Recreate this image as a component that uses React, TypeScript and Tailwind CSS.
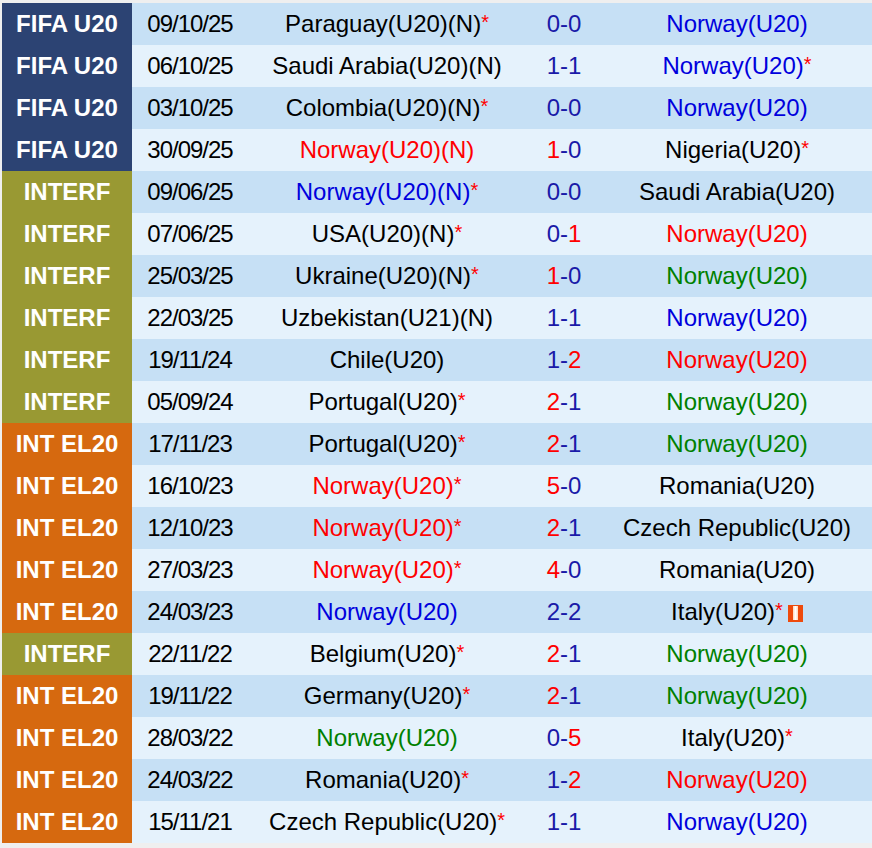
import React from "react";

type Side = { name: string; color: "k" | "b" | "r" | "g"; star?: boolean; card?: boolean };
type Row = { lg: "F" | "I" | "E"; date: string; home: Side; s1: string; s2: string; win: 0 | 1 | 2; away: Side };

const rows: Row[] = [
  { lg: "F", date: "09/10/25", home: { name: "Paraguay(U20)(N)", color: "k", star: true }, s1: "0", s2: "0", win: 0, away: { name: "Norway(U20)", color: "b" } },
  { lg: "F", date: "06/10/25", home: { name: "Saudi Arabia(U20)(N)", color: "k" }, s1: "1", s2: "1", win: 0, away: { name: "Norway(U20)", color: "b", star: true } },
  { lg: "F", date: "03/10/25", home: { name: "Colombia(U20)(N)", color: "k", star: true }, s1: "0", s2: "0", win: 0, away: { name: "Norway(U20)", color: "b" } },
  { lg: "F", date: "30/09/25", home: { name: "Norway(U20)(N)", color: "r" }, s1: "1", s2: "0", win: 1, away: { name: "Nigeria(U20)", color: "k", star: true } },
  { lg: "I", date: "09/06/25", home: { name: "Norway(U20)(N)", color: "b", star: true }, s1: "0", s2: "0", win: 0, away: { name: "Saudi Arabia(U20)", color: "k" } },
  { lg: "I", date: "07/06/25", home: { name: "USA(U20)(N)", color: "k", star: true }, s1: "0", s2: "1", win: 2, away: { name: "Norway(U20)", color: "r" } },
  { lg: "I", date: "25/03/25", home: { name: "Ukraine(U20)(N)", color: "k", star: true }, s1: "1", s2: "0", win: 1, away: { name: "Norway(U20)", color: "g" } },
  { lg: "I", date: "22/03/25", home: { name: "Uzbekistan(U21)(N)", color: "k" }, s1: "1", s2: "1", win: 0, away: { name: "Norway(U20)", color: "b" } },
  { lg: "I", date: "19/11/24", home: { name: "Chile(U20)", color: "k" }, s1: "1", s2: "2", win: 2, away: { name: "Norway(U20)", color: "r" } },
  { lg: "I", date: "05/09/24", home: { name: "Portugal(U20)", color: "k", star: true }, s1: "2", s2: "1", win: 1, away: { name: "Norway(U20)", color: "g" } },
  { lg: "E", date: "17/11/23", home: { name: "Portugal(U20)", color: "k", star: true }, s1: "2", s2: "1", win: 1, away: { name: "Norway(U20)", color: "g" } },
  { lg: "E", date: "16/10/23", home: { name: "Norway(U20)", color: "r", star: true }, s1: "5", s2: "0", win: 1, away: { name: "Romania(U20)", color: "k" } },
  { lg: "E", date: "12/10/23", home: { name: "Norway(U20)", color: "r", star: true }, s1: "2", s2: "1", win: 1, away: { name: "Czech Republic(U20)", color: "k" } },
  { lg: "E", date: "27/03/23", home: { name: "Norway(U20)", color: "r", star: true }, s1: "4", s2: "0", win: 1, away: { name: "Romania(U20)", color: "k" } },
  { lg: "E", date: "24/03/23", home: { name: "Norway(U20)", color: "b" }, s1: "2", s2: "2", win: 0, away: { name: "Italy(U20)", color: "k", star: true, card: true } },
  { lg: "I", date: "22/11/22", home: { name: "Belgium(U20)", color: "k", star: true }, s1: "2", s2: "1", win: 1, away: { name: "Norway(U20)", color: "g" } },
  { lg: "E", date: "19/11/22", home: { name: "Germany(U20)", color: "k", star: true }, s1: "2", s2: "1", win: 1, away: { name: "Norway(U20)", color: "g" } },
  { lg: "E", date: "28/03/22", home: { name: "Norway(U20)", color: "g" }, s1: "0", s2: "5", win: 2, away: { name: "Italy(U20)", color: "k", star: true } },
  { lg: "E", date: "24/03/22", home: { name: "Romania(U20)", color: "k", star: true }, s1: "1", s2: "2", win: 2, away: { name: "Norway(U20)", color: "r" } },
  { lg: "E", date: "15/11/21", home: { name: "Czech Republic(U20)", color: "k", star: true }, s1: "1", s2: "1", win: 0, away: { name: "Norway(U20)", color: "b" } },
];

const lgName = { F: "FIFA U20", I: "INTERF", E: "INT EL20" };
const lgBg = { F: "bg-[#2c4373]", I: "bg-[#999933]", E: "bg-[#d6690f]" };
const colorCls = { k: "text-black", b: "text-[#0000dd]", r: "text-[#ff0000]", g: "text-[#008000]" };

function Team({ s }: { s: Side }) {
  return (
    <span className={colorCls[s.color]}>
      {s.name}
      {s.star && <span className="text-[20px] text-[#ff0000] relative -top-[3px]">*</span>}
      {s.card && (
        <span className="ml-[5px] inline-flex justify-center items-center h-[17px] w-[15px] align-[0px] bg-[#ee4a0c]">
          <span className="h-[14px] w-[5px] bg-gradient-to-r from-[#ffd6b8] via-white to-[#ffd6b8]" />
        </span>
      )}
    </span>
  );
}

export default function App() {
  return (
    <div className="w-[872px] h-[848px] bg-[#efefef] pt-[3px] pl-[2px]" style={{ fontFamily: '"Liberation Sans", Arial, sans-serif' }}>
      <div className="flex flex-col">
        {rows.map((r, i) => (
          <div key={i} className={`flex h-[42px] items-center text-[24px] ${i % 2 === 0 ? "bg-[#c6e0f5]" : "bg-[#e5f2fc]"}`}>
            <div className={`w-[130px] h-full flex items-center justify-center font-bold text-white ${lgBg[r.lg]}`}>{lgName[r.lg]}</div>
            <div className="w-[116px] text-center text-black tracking-[-1px]">{r.date}</div>
            <div className="w-[278px] text-center whitespace-nowrap"><Team s={r.home} /></div>
            <div className="w-[76px] text-center text-[#1a1aa8]">
              <span className={r.win === 1 ? "text-[#ff0000]" : ""}>{r.s1}</span>-<span className={r.win === 2 ? "text-[#ff0000]" : ""}>{r.s2}</span>
            </div>
            <div className="w-[270px] text-center whitespace-nowrap"><Team s={r.away} /></div>
          </div>
        ))}
      </div>
    </div>
  );
}
